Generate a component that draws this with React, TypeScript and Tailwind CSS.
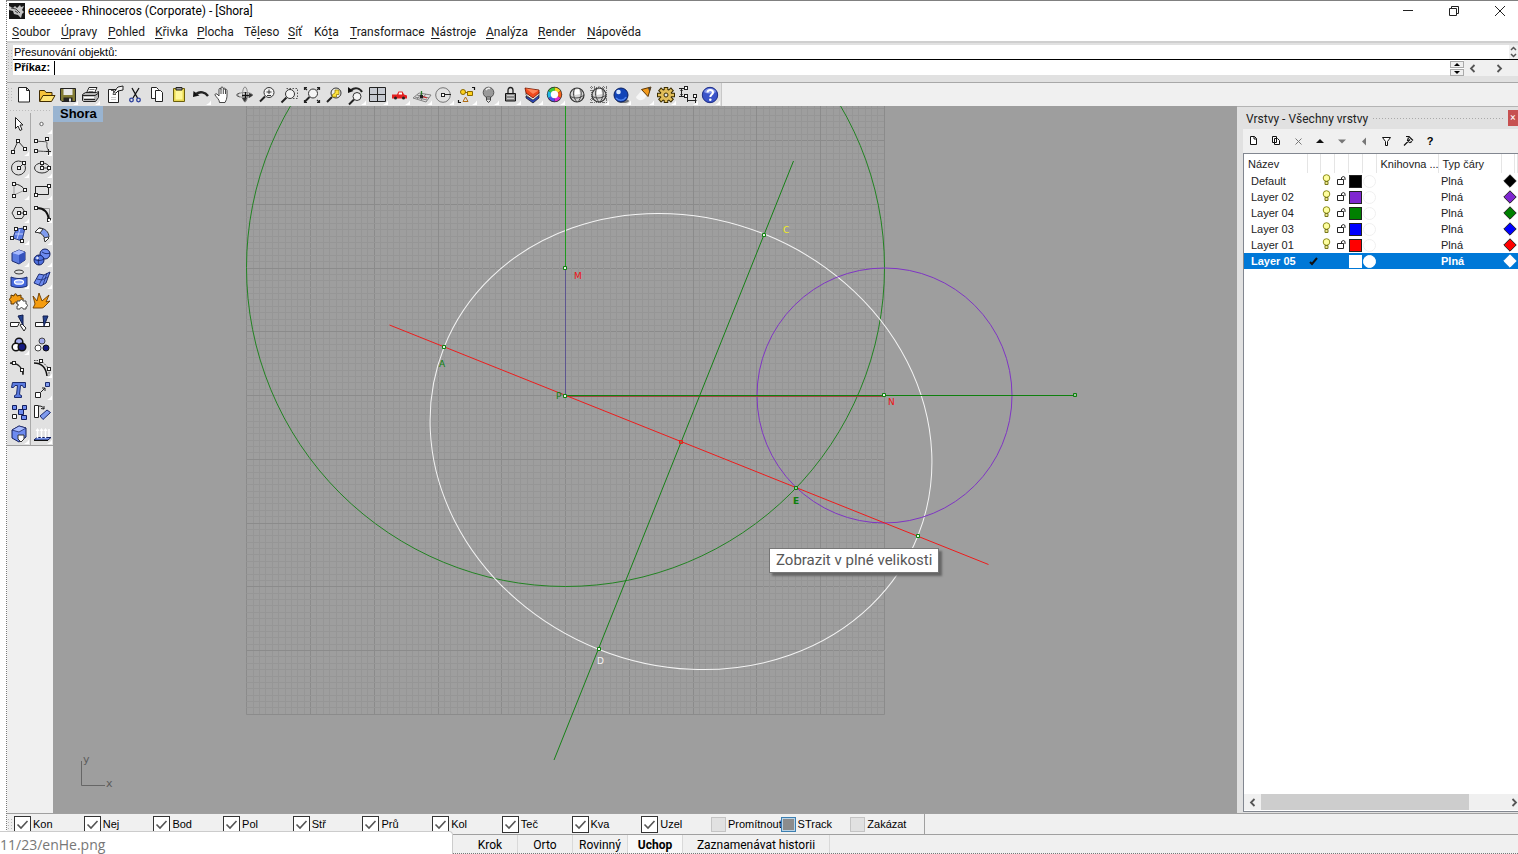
import React from 'react';

type Tool = { label: string; icon: React.ReactNode; flyout?: boolean };

interface Layer {
  name: string;
  color: string;
  current?: boolean;
}

const MENU = [
  ['', 'S', 'oubor', 'w-[49px]'],
  ['', 'Ú', 'pravy', 'w-[47px]'],
  ['', 'P', 'ohled', 'w-[47px]'],
  ['', 'K', 'řivka', 'w-[42px]'],
  ['', 'P', 'locha', 'w-[47px]'],
  ['Tě', 'l', 'eso', 'w-[44px]'],
  ['', 'S', 'íť', 'w-[26px]'],
  ['Kó', 't', 'a', 'w-[36px]'],
  ['', 'T', 'ransformace', 'w-[81px]'],
  ['', 'N', 'ástroje', 'w-[55px]'],
  ['', 'A', 'nalýza', 'w-[52px]'],
  ['', 'R', 'ender', 'w-[49px]'],
  ['', 'N', 'ápověda', 'w-[60px]'],
];

const LAYERS: Layer[] = [
  { name: 'Default', color: '#000000' },
  { name: 'Layer 02', color: '#7f26d0' },
  { name: 'Layer 04', color: '#008000' },
  { name: 'Layer 03', color: '#0000ff' },
  { name: 'Layer 01', color: '#ff0000' },
  { name: 'Layer 05', color: '#ffffff', current: true },
];

const OSNAPS = ['Kon', 'Nej', 'Bod', 'Pol', 'Stř', 'Prů', 'Kol', 'Teč', 'Kva', 'Uzel'];

const Handle = ({ x, y }: { x: number; y: number }) => (
  <rect x={Math.floor(x) - 1.5} y={Math.floor(y) - 1.5} width="3" height="3" fill="#fff" stroke="#222" strokeWidth="1" />
);

const Magnifier = ({ cx = 13, cy = 9, r = 4.5, fill = '#f4f4f4' }) => (
  <>
    <path d={`M${cx - r + 1} ${cy + r - 1}L${cx - r - 4} ${cy + r + 4}`} stroke="#222" strokeWidth="2" />
    <circle cx={cx} cy={cy} r={r} fill={fill} stroke="#333" />
  </>
);

const MAIN_TOOLS: Tool[] = [
  { label: 'Nový', icon: <path d="M5.5 3.5h8l3 3v11.5h-11zM13.5 3.5v3h3" fill="#fff" stroke="#222" /> },
  {
    label: 'Otevřít',
    icon: (
      <>
        <path d="M4.5 17V6.500h5l1.500 2h6v3" fill="#f7c33c" stroke="#422c00" />
        <path d="M4.5 17.500L8 11.500h12L16.500 17.500z" fill="#ffe476" stroke="#422c00" />
      </>
    ),
  },
  {
    label: 'Uložit',
    flyout: true,
    icon: (
      <>
        <path d="M3.5 4.500h15v13H5L3.500 16z" fill="#827b35" stroke="#222" />
        <path d="M6.500 5h9v6h-9z" fill="#e8e8e8" />
        <path d="M6.500 13.500h9v4h-9z" fill="#222" />
        <path d="M12 14.500h2v3h-2z" fill="#ddd" />
      </>
    ),
  },
  {
    label: 'Tisk',
    flyout: true,
    icon: (
      <>
        <path d="M7.500 9L10 3.500h8L15.500 9" fill="#fff" stroke="#222" />
        <path d="M10.500 5.500h5M9.500 7.500h5" stroke="#777" />
        <path d="M3.500 10.500l3-2h11l2-1v6l-3 4h-12l-1-1z" fill="#b5b5b5" stroke="#222" />
        <path d="M4 11.500h12l3-2M5 15.500h11" stroke="#222" />
        <path d="M5 13.500h10" stroke="#fff" strokeWidth="1.500" />
      </>
    ),
  },
  {
    label: 'Vlastnosti dokumentu',
    icon: (
      <>
        <path d="M6.500 5.500h10v13h-10z" fill="#fff" stroke="#222" />
        <path d="M11 8c3 0 3-4 5-5l5-1v4l-5 1-2 2c-2 1-1-1-3-1z" fill="#f4f4f4" stroke="#222" />
        <path d="M9 6.500h3l-1 4h3" stroke="#555" />
        <path d="M9 13.500h5M9 15.500h5" stroke="#ccc" />
      </>
    ),
  },
  {
    label: 'Vyjmout',
    icon: (
      <>
        <path d="M8 4l5.500 10M15 4L9 14" stroke="#111" strokeWidth="1.300" />
        <circle cx="7.500" cy="16" r="1.800" fill="none" stroke="#2b3f9c" strokeWidth="1.300" />
        <circle cx="14.500" cy="16" r="1.800" fill="none" stroke="#2b3f9c" strokeWidth="1.300" />
      </>
    ),
  },
  {
    label: 'Kopírovat',
    icon: (
      <>
        <path d="M5.500 3.500h5l2 2v9h-7z" fill="#fff" stroke="#222" />
        <path d="M9.500 6.500h5l2 2v9h-7z" fill="#fff" stroke="#222" />
      </>
    ),
  },
  {
    label: 'Vložit',
    icon: (
      <>
        <path d="M5.500 4.500h11v13h-11z" fill="#e8d750" stroke="#6b5f0c" />
        <path d="M7.500 6.500h7v9h-7z" fill="#fff79a" />
        <path d="M8 3.500h6v2.500H8z" fill="#999" stroke="#222" />
      </>
    ),
  },
  {
    label: 'Zpět',
    flyout: true,
    icon: (
      <>
        <path d="M3 13L3.500 7l6 4.500z" fill="#111" />
        <path d="M6 10c4-3 9-2 12 2" stroke="#222" strokeWidth="2.400" fill="none" />
      </>
    ),
  },
  {
    label: 'Posun pohledu',
    icon: (
      <path
        d="M7.500 18.500c0-3-3-5-4.500-7.500 0-2 2-1.500 4 1V5.500c0-1.500 2-1.500 2 0V4c0-1.500 2-1.500 2 0s2-1 2 .5V6c0-1 2-1 2 .5 0 5 .5 8-2 12zM9 5.500V10M11.300 4.500V10M13.500 5.500V10"
        fill="#fff"
        stroke="#333"
        strokeWidth=".9"
      />
    ),
  },
  {
    label: 'Otáčet pohled',
    icon: (
      <>
        <ellipse cx="11" cy="11" rx="7.500" ry="2.500" fill="none" stroke="#888" />
        <ellipse cx="11" cy="10.500" rx="2.500" ry="7.500" fill="none" stroke="#888" />
        <path d="M11.500 8v8M8 11.500h7" stroke="#111" strokeWidth="1.300" />
        <path d="M8 14l3 4 2-4zM15 9l4 2-4 3z" fill="#333" />
        <path d="M2.500 10.500l3-1.500M2.500 11.500l3 1.500" stroke="#555" />
      </>
    ),
  },
  {
    label: 'Dynamický zoom',
    icon: (
      <>
        <Magnifier cx={13} cy={8.5} r={5} />
        <path d="M10.500 8h5M13 5.500v4.500M11 11.500h4" stroke="#222" strokeWidth=".9" />
      </>
    ),
  },
  {
    label: 'Zoom oknem',
    icon: (
      <>
        <path d="M7.500 4.500h11v10h-6" fill="none" stroke="#555" strokeDasharray="1.500 1.500" />
        <Magnifier cx={11} cy={10} />
      </>
    ),
  },
  {
    label: 'Zoom na vše',
    icon: (
      <>
        <path d="M3.500 6V3.500H6M16 3.500h2.500V6M18.500 16v2.500H16M3.500 16v2.500H6M4 4l2 2M18 4l-2 2M18 18l-2-2" fill="none" stroke="#222" strokeWidth="1.200" />
        <Magnifier cx={12} cy={9.500} />
      </>
    ),
  },
  {
    label: 'Zoom na vybrané',
    icon: (
      <>
        <Magnifier cx={13} cy={9} r={5} fill="#eee" />
        <path d="M9.500 10.500l2.500-1.500V6h4v4.500h-2.500V13h-4z" fill="#ffe23b" stroke="#887500" strokeWidth=".7" />
      </>
    ),
  },
  {
    label: 'Předchozí pohled',
    flyout: true,
    icon: (
      <>
        <Magnifier cx={12} cy={12.500} r={4} />
        <path d="M3 9V3l5.500 4z" fill="#111" />
        <path d="M6 6c4-3 9-2 11 2" stroke="#222" strokeWidth="2" fill="none" />
      </>
    ),
  },
  {
    label: 'Čtyři pohledy',
    flyout: true,
    icon: (
      <>
        <path d="M2.500 3.500h16v14h-16z" fill="#c7cbd2" stroke="#222" />
        <path d="M10.500 3.500v14M2.500 10.500h16" stroke="#222" />
      </>
    ),
  },
  {
    label: 'Pohled zprava',
    flyout: true,
    icon: (
      <>
        <path d="M3 10.500h5l1.500-3h4l1.500 3 3 1v3H3z" fill="#e32020" />
        <path d="M10 8.500h3v2H9.500z" fill="#fff" />
        <circle cx="6.500" cy="14" r="1.500" fill="#222" />
        <circle cx="14.500" cy="14" r="1.500" fill="#222" />
      </>
    ),
  },
  {
    label: 'Konstrukční rovina',
    flyout: true,
    icon: (
      <>
        <path d="M2 14l6-5 12 2-5 7zM4 13l12 3M6 11l12 3M6 15l5-6M10 16l5-6" fill="none" stroke="#777" strokeWidth=".9" />
        <path d="M10.500 12V7" stroke="#2b7a2b" strokeWidth="1.300" />
        <path d="M10 12l6 2" stroke="#c22" strokeWidth="1.300" />
        <path d="M9 11h3v3H9z" fill="#222" />
      </>
    ),
  },
  {
    label: 'Nastavit pohled',
    flyout: true,
    icon: (
      <>
        <circle cx="10" cy="11" r="7.300" fill="none" stroke="#777" />
        <path d="M10 10.500h8" stroke="#222" />
        <Handle x={10} y={11} />
      </>
    ),
  },
  {
    label: 'Výběr objektů',
    flyout: true,
    icon: (
      <>
        <path d="M16 3.500h2.500V6M2.500 16v2.500H5" fill="none" stroke="#111" strokeWidth="1.200" />
        <circle cx="7" cy="8" r="2.500" fill="#ffd21f" stroke="#8a6a00" />
        <path d="M11.500 7.500h5v4h-5z" fill="#ffd21f" stroke="#8a6a00" />
        <path d="M9.500 13l-2.500 4.500h5z" fill="none" stroke="#b06b12" />
        <path d="M9 8.500h2" stroke="#8a6a00" />
      </>
    ),
  },
  {
    label: 'Skrýt objekty',
    flyout: true,
    icon: (
      <>
        <circle cx="10.500" cy="8.500" r="5.300" fill="#999" stroke="#555" />
        <path d="M8 6c1-1.500 2.500-2 4-1.500" stroke="#eee" fill="none" strokeWidth="1.500" />
        <path d="M8.500 13h4v3.500l-2 2-2-2z" fill="#ddd" stroke="#444" />
        <path d="M8.500 15h4" stroke="#333" />
      </>
    ),
  },
  {
    label: 'Zamknout objekty',
    flyout: true,
    icon: (
      <>
        <path d="M8 10V6.500c0-4 5-4 5 0V10" fill="none" stroke="#222" strokeWidth="1.300" />
        <path d="M5.500 9.500h10v7.500h-10z" fill="#888" stroke="#111" />
        <path d="M7 11.500h7M7 14.500h7" stroke="#ccc" />
      </>
    ),
  },
  {
    label: 'Vrstvy',
    flyout: true,
    icon: (
      <>
        <path d="M4 12l7 4 6-5v3l-6 5-7-5z" fill="#2b45b8" stroke="#111" strokeWidth=".7" />
        <path d="M4 9l7 4 6-5v3l-6 5-7-5z" fill="#fff" stroke="#333" strokeWidth=".7" />
        <path d="M3 4l14 2v3l-6 5-7-5z" fill="#f04a1d" stroke="#701500" strokeWidth=".8" />
        <path d="M4 4.500L16.500 6.500 11 10z" fill="#ff8658" />
      </>
    ),
  },
  {
    label: 'Vlastnosti',
    flyout: true,
    icon: (
      <>
        <circle cx="10.500" cy="10.500" r="7.700" fill="#222" />
        <path d="M10.500 10.500V3.500a7 7 0 0 1 6 3.500z" fill="#f6d51f" />
        <path d="M10.500 10.500l6-3.500a7 7 0 0 1 0 7z" fill="#f4631b" />
        <path d="M10.500 10.500l6 3.500a7 7 0 0 1-6 3.500z" fill="#e02ccc" />
        <path d="M10.500 10.500v7a7 7 0 0 1-6-3.500z" fill="#4a50e8" />
        <path d="M10.500 10.500L4.500 14a7 7 0 0 1 0-7z" fill="#21b9e8" />
        <path d="M10.500 10.500L4.500 7a7 7 0 0 1 6-3.500z" fill="#3cc93a" />
        <circle cx="10.500" cy="10.500" r="3.700" fill="#fff" />
      </>
    ),
  },
  {
    label: 'Stínovat',
    icon: (
      <>
        <circle cx="11" cy="11" r="7" fill="#d4d4d4" stroke="#333" strokeWidth="1.200" />
        <path d="M8.500 5c-2 4-1 9 2.500 13M4 12c4 3 10 2.500 14-1M14 5c2.500 4 1 9-2 13" fill="none" stroke="#444" />
        <path d="M9 6l4-1 1 5-5 1z" fill="#fff" />
      </>
    ),
  },
  {
    label: 'Render náhled',
    flyout: true,
    icon: (
      <>
        <path d="M3.500 2v18M6.500 2v18M15.500 2v18M18.500 2v18M11 2v18M2 3.500h18M2 6.500h18M2 15.500h18M2 18.500h18" stroke="#777" strokeDasharray="1 1" />
        <circle cx="11" cy="11" r="7" fill="#d4d4d4" stroke="#333" strokeWidth="1.200" />
        <path d="M8.500 5c-2 4-1 9 2.500 13M4 12c4 3 10 2.500 14-1M14 5c2.500 4 1 9-2 13" fill="none" stroke="#444" />
        <path d="M9 6l4-1 1 5-5 1z" fill="#fff" />
      </>
    ),
  },
  {
    label: 'Render',
    flyout: true,
    icon: (
      <>
        <ellipse cx="13" cy="17" rx="6" ry="2" fill="#777" />
        <circle cx="11" cy="11" r="7" fill="#1244b8" stroke="#0a1f5e" />
        <circle cx="8.500" cy="8" r="2.300" fill="#d5e6ff" />
        <path d="M6 14c3 3 8 3 10-1" stroke="#4f84f0" fill="none" strokeWidth="1.500" />
      </>
    ),
  },
  {
    label: 'Světla',
    flyout: true,
    icon: (
      <>
        <path d="M9 6L3 13c1 4 7 4 9 1l2-3z" fill="#f6f6f6" />
        <path d="M8.500 5.500L18 3l-3 9.500z" fill="#f2991a" stroke="#5c3500" />
        <path d="M15 4l3-1-1.500 5z" fill="#444" />
      </>
    ),
  },
  {
    label: 'Možnosti',
    flyout: true,
    icon: (
      <>
        <g stroke="#3a2c00" strokeWidth="4.500">
          <path d="M11 3v16M2 11h18M4.500 5l13 12M17.500 5l-13 12" />
        </g>
        <circle cx="11" cy="11" r="6.200" fill="#3a2c00" />
        <g stroke="#e0bd5a" strokeWidth="2.600">
          <path d="M11 4v14M3 11h16M5.300 5.800l11.400 10.400M16.700 5.800L5.300 16.200" />
        </g>
        <circle cx="11" cy="11" r="5.200" fill="#e0bd5a" />
        <circle cx="11" cy="11" r="2" fill="#e1e1e1" stroke="#3a2c00" />
      </>
    ),
  },
  {
    label: 'Kóty',
    flyout: true,
    icon: (
      <>
        <path d="M4.500 4.500v8M2 4.500h7M2 12.500h5M10.500 16.500h9M10.500 14v4M18.500 13v6" stroke="#222" />
        <path d="M3 7l1.500-2L6 7zM3 10l1.500 2L6 10z" fill="#222" />
        <Handle x={9} y={4} />
        <Handle x={9} y={12} />
        <Handle x={18} y={12} />
      </>
    ),
  },
  {
    label: 'Nápověda',
    flyout: true,
    icon: (
      <>
        <circle cx="11" cy="11" r="7.700" fill="#3b54c9" stroke="#1c2c85" />
        <path d="M5 8a6.500 6 0 0 1 12 0c-3 2-9 2-12 0z" fill="#8496ea" />
        <path d="M8.500 8.500c0-3.500 5.500-3.500 5.500 0 0 2-2.700 2-2.700 4.500" fill="none" stroke="#fff" strokeWidth="2" />
        <circle cx="11.300" cy="15.700" r="1.300" fill="#fff" />
      </>
    ),
  },
];

// two tools per row, left column first
const SIDE_TOOLS: Tool[] = [
  { label: 'Výběr', icon: <path d="M7.500 4.500v11l2.500-2.500 2 4.500 2-1-2-4.500h3z" fill="#fff" stroke="#222" /> },
  { label: 'Bod', flyout: true, icon: <circle cx="10.500" cy="11" r="1.700" fill="#fff" stroke="#666" /> },
  {
    label: 'Polylinie',
    flyout: true,
    icon: (
      <>
        <path d="M5 17l5-11 7 8" fill="none" stroke="#333" />
        <Handle x={5} y={17} />
        <Handle x={10} y={6} />
        <Handle x={17} y={14} />
      </>
    ),
  },
  {
    label: 'Křivka',
    flyout: true,
    icon: (
      <>
        <path d="M5 6c8 1 11 0 11 2s-1 4 2 8c-3 1-7 0-13 0" fill="none" stroke="#444" />
        <Handle x={5} y={6} />
        <Handle x={16} y={4} />
        <Handle x={5} y={16} />
        <path d="M17.500 14v6M15 16.500h5" stroke="#222" />
      </>
    ),
  },
  {
    label: 'Kružnice',
    flyout: true,
    icon: (
      <>
        <circle cx="10.500" cy="11" r="7" fill="none" stroke="#333" />
        <path d="M11 11l5-5" stroke="#333" />
        <Handle x={11} y={11} />
        <Handle x={16} y={6} />
      </>
    ),
  },
  {
    label: 'Elipsa',
    flyout: true,
    icon: (
      <>
        <ellipse cx="11" cy="11" rx="7.500" ry="5" fill="none" stroke="#333" />
        <path d="M11 6v5h8" stroke="#333" fill="none" />
        <Handle x={11} y={6} />
        <Handle x={11} y={11} />
        <Handle x={18} y={11} />
      </>
    ),
  },
  {
    label: 'Oblouk',
    flyout: true,
    icon: (
      <>
        <path d="M17 11L6 16V5" fill="none" stroke="#999" />
        <path d="M6 5c5 0 9 3 11 6" fill="none" stroke="#222" />
        <Handle x={6} y={5} />
        <Handle x={17} y={11} />
        <Handle x={6} y={17} />
      </>
    ),
  },
  {
    label: 'Obdélník',
    flyout: true,
    icon: (
      <>
        <path d="M4.500 7.500h13v8h-13z" fill="none" stroke="#222" />
        <Handle x={18} y={7} />
        <Handle x={5} y={16} />
      </>
    ),
  },
  {
    label: 'Mnohoúhelník',
    flyout: true,
    icon: (
      <>
        <path d="M4 11l3-5.500h7l3.500 5.500-3.500 5.500H7z" fill="none" stroke="#333" />
        <path d="M11 11h6" stroke="#333" />
        <Handle x={11} y={11} />
        <Handle x={17} y={11} />
      </>
    ),
  },
  {
    label: 'Zaoblit křivky',
    flyout: true,
    icon: (
      <>
        <path d="M5 6.500h13.500V18" fill="none" stroke="#999" />
        <path d="M6 6c7 0 11 4 12 12" fill="none" stroke="#111" strokeWidth="1.800" />
        <Handle x={5} y={6} />
        <Handle x={18} y={18} />
      </>
    ),
  },
  {
    label: 'Plocha z bodů',
    flyout: true,
    icon: (
      <>
        <path d="M8 5l9-1-3 13-9-3z" fill="#5b7be0" stroke="#1c2c70" strokeWidth=".9" />
        <path d="M12 5l-3 10M7 10h8" stroke="#c3d0ff" />
        <Handle x={8} y={5} />
        <Handle x={17} y={4} />
        <Handle x={4} y={14} />
        <Handle x={14} y={17} />
      </>
    ),
  },
  {
    label: 'Zaoblit plochy',
    flyout: true,
    icon: (
      <>
        <path d="M4 8l4-4c6 0 10 4 10 9l-4 4c0-5-4-9-10-9z" fill="#7f9bee" stroke="#333" />
        <path d="M4 8l4-4 4 1-3 4z" fill="#fff" stroke="#333" />
        <path d="M13 14l4-1 1 1-4 4z" fill="#fff" stroke="#333" />
      </>
    ),
  },
  {
    label: 'Kvádr',
    flyout: true,
    icon: (
      <>
        <path d="M4 7l7-3 6 2v8l-6 4-7-3z" fill="#5b7be0" stroke="#1c2c70" />
        <path d="M4 7l7-3 6 2-6 3z" fill="#a9bcff" />
        <path d="M11 9v9l6-4V6z" fill="#3552bb" />
      </>
    ),
  },
  {
    label: 'Booleovské operace',
    flyout: true,
    icon: (
      <>
        <circle cx="14" cy="8" r="5" fill="#6d8bf0" stroke="#111d5c" />
        <circle cx="8" cy="14" r="5" fill="#5072e0" stroke="#111d5c" />
        <path d="M3 13c3 2 7 2 10 0M8 9c-1 3-1 7 0 10M11 6c3 2 5 2 8 1" stroke="#111d5c" fill="none" strokeWidth=".8" />
        <circle cx="6.500" cy="12" r="1.300" fill="#dfe7ff" />
      </>
    ),
  },
  {
    label: 'Promítnout křivky',
    flyout: true,
    icon: (
      <>
        <ellipse cx="11" cy="4" rx="4.500" ry="2" fill="none" stroke="#333" />
        <path d="M3 9c5 2 11 2 16 0v9c-5 2-11 2-16 0z" fill="#4467dc" stroke="#1c2c70" />
        <ellipse cx="11" cy="14" rx="4.500" ry="2.200" fill="#9db4ff" stroke="#fff" strokeWidth="1.300" />
      </>
    ),
  },
  {
    label: 'Síť',
    flyout: true,
    icon: (
      <>
        <path d="M3 15l5-9 5 1 6-3-4 11-5 3z" fill="#6d8bf0" stroke="#1c2c70" />
        <path d="M6 11l5 1 6-3M8 17l5-10M12 17l4-12" stroke="#1c2c70" fill="none" strokeWidth=".8" />
      </>
    ),
  },
  {
    label: 'Spojit',
    icon: (
      <>
        <path d="M3 5l3 1c0-3 3-3 3 0l4-1v3c3-1 3 3 0 3v3H9c0-3-3-2-3 0H3v-3c-2 0-2-3 0-3z" fill="#f39c12" stroke="#5c3500" />
        <path d="M9 11h3c0-2 3-2 3 0h3v3c2 0 2 3 0 3v2h-3c0-2-3-2-3 0H9v-3c2 0 2-2 0-2z" fill="#fff" stroke="#444" />
      </>
    ),
  },
  {
    label: 'Rozložit',
    icon: <path d="M2 6l4 5 2-8 3 8 7-6-3 7 4-1-6 6c-1 1-2 1-3 1H2l2-4z" fill="#f59c0f" stroke="#6b3b00" strokeWidth=".9" />,
  },
  {
    label: 'Oříznout',
    icon: (
      <>
        <path d="M2.500 10.500h9l-2 4h-7z" fill="#fff" stroke="#222" />
        <path d="M12 13l2-1 4 4-2 3z" fill="#fff" stroke="#222" />
        <path d="M10 4l5-1v10z" fill="#24428f" stroke="#111d4c" />
      </>
    ),
  },
  {
    label: 'Rozdělit',
    icon: (
      <>
        <path d="M4.500 10.500h14v4h-14z" fill="#fff" stroke="#222" />
        <path d="M12 4h5l-4 10z" fill="#24428f" stroke="#111d4c" />
      </>
    ),
  },
  {
    label: 'Seskupit',
    flyout: true,
    icon: (
      <>
        <circle cx="11" cy="8" r="3.800" fill="#a5aef0" stroke="#111" strokeWidth="1.500" />
        <circle cx="8" cy="13" r="3.800" fill="#fff" stroke="#111" strokeWidth="1.500" />
        <circle cx="14" cy="13" r="3.800" fill="#151a80" stroke="#111" strokeWidth="1.500" />
      </>
    ),
  },
  {
    label: 'Zrušit skupinu',
    icon: (
      <>
        <circle cx="11" cy="7" r="3" fill="#a5aef0" stroke="#444" />
        <circle cx="7" cy="14" r="3" fill="#fff" stroke="#444" />
        <circle cx="15" cy="14" r="3" fill="#151a80" stroke="#111" />
      </>
    ),
  },
  {
    label: 'Upravit body',
    icon: (
      <>
        <path d="M3 6c7 0 12 5 12 12" fill="none" stroke="#222" strokeWidth="1.300" />
        <path d="M2 6l5 1M15 11v6" stroke="#222" strokeWidth="1.500" />
        <Handle x={6} y={6} />
        <Handle x={14} y={13} />
      </>
    ),
  },
  {
    label: 'Upravit řídicí body',
    flyout: true,
    icon: (
      <>
        <path d="M3 6c8 0 12 5 13 13" fill="none" stroke="#111" strokeWidth="1.500" />
        <path d="M3 3.500h9M10 3.500l8 8v7" fill="none" stroke="#444" strokeDasharray="1.500 1" />
        <Handle x={10} y={4} />
        <Handle x={18} y={12} />
      </>
    ),
  },
  {
    label: 'Text',
    icon: <path d="M4.500 3.500h13v5h-2l-1-2h-2l-1 9 2 1v2h-7v-2l2-1 1-9H7l-1.500 2h-2z" fill="#5b7be0" stroke="#1c2c70" />,
  },
  {
    label: 'Přesunout',
    flyout: true,
    icon: (
      <>
        <path d="M4.500 13.500h5v5h-5z" fill="#fff" stroke="#222" />
        <path d="M14.500 3.500h4v4h-4z" fill="#7f9bee" stroke="#1c2c70" />
        <path d="M10 13l4-4M14 9h-3M14 9v3" stroke="#222" />
      </>
    ),
  },
  {
    label: 'Kopírovat objekty',
    icon: (
      <>
        <path d="M4.500 13.500h4v4h-4z" fill="#fff" stroke="#222" />
        <path d="M4.500 4.500h4v4h-4zM10.500 8.500h5v5h-5zM14.500 4.500h4v4h-4zM13.500 14.500h5v4h-5z" fill="#6d8bf0" stroke="#111d5c" />
      </>
    ),
  },
  {
    label: 'Otočit',
    icon: (
      <>
        <path d="M3.500 4.500h4v12h-4z" fill="#fff" stroke="#222" />
        <path d="M9 15l7-6 3.500 2.500-7.500 7z" fill="#7f9bee" stroke="#1c2c70" />
        <path d="M8 5c3 0 4 1 5 3M13 8V5M13 8l-3-.5" stroke="#222" fill="none" />
      </>
    ),
  },
  {
    label: 'Viditelnost',
    flyout: true,
    icon: (
      <>
        <path d="M4 7l7-4 7 2v9l-7 5-7-4z" fill="#6d8bf0" stroke="#111d5c" />
        <path d="M4 7l7-4 7 2-7 4z" fill="#a9bcff" stroke="#111d5c" strokeWidth=".7" />
        <path d="M10 12h6v4l-3 3-3-3z" fill="#fff" stroke="#333" />
      </>
    ),
  },
  {
    label: 'Analýza směru',
    flyout: true,
    icon: (
      <>
        <path d="M3 17l3-2.500h14L17 17z" fill="#7f9bee" stroke="#111d5c" />
        <path d="M6.500 15V6M10.500 15V6M14.500 15V6M18 14V6" stroke="#fff" strokeWidth="1.500" />
        <path d="M4.500 8l2-3 2 3zM8.500 8l2-3 2 3zM12.500 8l2-3 2 3z" fill="#fff" />
        <path d="M3 17.500h14" stroke="#111" />
      </>
    ),
  },
];

const ToolButton = ({ label, icon, flyout }: Tool) => (
  <button aria-label={label} className="h-[22px] w-[22px] shrink-0 hover:bg-white/60">
    <svg width="22" height="22" viewBox="0 0 22 22" fill="none">
      {icon}
      {flyout && <path d="M21 16.500v4.500h-5q3-1 5-4.500z" fill="#fff" />}
    </svg>
  </button>
);

const Chevron = ({ right }: { right?: boolean }) => (
  <svg width="7" height="9" viewBox="0 0 7 9" fill="none" stroke="#555" strokeWidth="1.800">
    <path d={right ? 'M1.500 1l3.500 3.500L1.500 8' : 'M5.500 1L2 4.500 5.500 8'} />
  </svg>
);

const Grip = () => <div className="my-1 w-1.5 shrink-0 bg-[radial-gradient(#bbb_1px,transparent_1px)] bg-[size:3px_3px]" />;

const MINOR = 6.375;

const Viewport = () => {
  const lines = Array.from({ length: 101 }, (_, i) => i);

  return (
    <main className="relative min-w-0 flex-1 overflow-hidden bg-[#9e9e9e]">
      <svg className="absolute inset-0 h-full w-full" fontFamily="DejaVu Sans, sans-serif" fontSize="9">
        {/* world origin sits at 512.5, 289.5 */}
        <g transform="translate(512.5 289.5)" fill="none">
          {lines.map((i) => {
            const p = Math.round((i - 50) * MINOR);
            const stroke = i % 10 === 0 ? '#8b8b8b' : '#969696';
            return (
              <g key={i} stroke={stroke}>
                <path d={`M${p} -319V319`} />
                <path d={`M-319 ${p}H319`} />
              </g>
            );
          })}

          <circle cx="0" cy="-128" r="319" stroke="#228322" />
          <ellipse cx="115.500" cy="46" rx="255" ry="223.500" transform="rotate(21.700 115.500 46)" stroke="#f4f4f4" />
          <circle cx="319" cy="0" r="127.500" stroke="#7f35c4" />

          <path d="M0 -400V-128" stroke="#1f9a1f" />
          <path d="M0 -128V0" stroke="#5d5590" />
          <path d="M0 0H510" stroke="#0f800f" />
          <path d="M0 1H319" stroke="#a04848" />
          <path d="M228 -234.500L-11.500 364.500" stroke="#168016" />
          <path d="M-176 -70.500L423 169" stroke="#ee1c1c" />

          <g stroke="#0c800c" fill="#e8f4e8">
            <path d="M-2 -129h3v3h-3zM-2 -1h3v3h-3zM317 -2h3v3h-3z" />
            <path d="M197 -162h3v3h-3zM-123 -50h3v3h-3zM351 139h3v3h-3zM32 252h3v3h-3z" />
          </g>
          <g stroke="#0c800c" fill="#9fc49f">
            <path d="M508 -2h3v3h-3zM229 91h3v3h-3z" />
          </g>
          <path d="M114 45h3v3h-3z" stroke="#ee1c1c" fill="#9a6a3a" />
        </g>

        <text x="521" y="173" fill="#ee1111">M</text>
        <text x="835" y="299" fill="#ee1111">N</text>
        <text x="730" y="127" fill="#f2ee1a">C</text>
        <text x="386" y="261" fill="#0c800c">A</text>
        <text x="503" y="293" fill="#0c800c">P</text>
        <text x="740" y="398" fill="#0c800c" fontWeight="bold">E</text>
        <text x="544" y="558" fill="#f4f4f4">D</text>

        <path d="M28.500 655v24.500H52" fill="none" stroke="#666" />
        <text x="30" y="657" fill="#5c5c5c" fontSize="11">y</text>
        <text x="53" y="681" fill="#5c5c5c" fontSize="11">x</text>
      </svg>

      <span className="absolute left-0 top-0 h-4 bg-[#99b4d1] pl-[7px] pr-[6px] font-['Liberation_Sans'] text-[13px] font-bold leading-4 text-black">
        Shora
      </span>
      <div className="absolute left-[716px] top-[442px] border border-[#767676] bg-white px-[6px] font-['Roboto'] text-[15px] leading-[23px] text-[#575757] shadow-[3px_3px_2px_#666]">
        Zobrazit v plné velikosti
      </div>
    </main>
  );
};

const LAYER_TOOLS: Tool[] = [
  { label: 'Nová vrstva', icon: <path d="M7.500 6.500h4l2 2v6h-6zM11 6.500v2.500h2.500" fill="#fff" stroke="#111" /> },
  { label: 'Nová podvrstva', icon: <path d="M7.500 6.500h4v6h-4zM9.500 8.500h3l2 2v4h-5z" fill="#fff" stroke="#111" /> },
  { label: 'Odstranit', icon: <path d="M8.500 8.500l6 6M14.500 8.500l-6 6" stroke="#777" /> },
  { label: 'Nahoru', icon: <path d="M7 13l4-4 4 4z" fill="#111" /> },
  { label: 'Dolů', icon: <path d="M7 9.500h8l-4 4z" fill="#777" /> },
  { label: 'O úroveň výš', icon: <path d="M13 7.500v8l-4-4z" fill="#777" /> },
  { label: 'Filtr', icon: <path d="M7.500 7.500h8l-3 4v4h-2v-4z" fill="#fff" stroke="#111" /> },
  { label: 'Nástroje', icon: <path d="M7 15.500l6-6M9 6.500h3l4 4M11.500 7.500l-1 3 2.500 2 2-1" stroke="#111" strokeWidth="1.200" /> },
];

const Bulb = () => (
  <svg width="9" height="12" viewBox="0 0 9 12">
    <circle cx="4.500" cy="4" r="3.300" fill="#ffffa0" stroke="#8c8c1c" />
    <path d="M3 7.500h3v3H3z" fill="#eee88a" stroke="#77771c" />
  </svg>
);

const Unlocked = () => (
  <svg width="10" height="11" viewBox="0 0 10 11" fill="none" stroke="#222">
    <path d="M1.500 4.500h6v5h-6zM5.500 4V2.500q2-2 3.500 0V5" />
  </svg>
);

const LayerRow = ({ name, color, current }: Layer) => (
  <tr className={`h-4 ${current ? 'bg-[#0078d7] font-bold text-white' : 'text-[#222]'}`}>
    <td className="whitespace-nowrap p-0 pl-[7px]">{name}</td>
    <td className="p-0 pl-0.5">
      {current && (
        <svg width="10" height="9" viewBox="0 0 10 9" fill="none" stroke="#111" strokeWidth="2">
          <path d="M1 5l2 2 5-6" />
        </svg>
      )}
    </td>
    <td className="p-0 pb-0.5 pl-0.5">{!current && <Bulb />}</td>
    <td className="p-0 pb-0.5 pl-0.5">{!current && <Unlocked />}</td>
    <td className="p-0 pl-px">
      <svg width="13" height="14" viewBox="0 0 13 14">
        <rect x=".5" y="1.500" width="12" height="12" fill={color} stroke={current ? '#fff' : '#222'} />
      </svg>
    </td>
    <td className="p-0 pl-px">
      <svg width="13" height="13" viewBox="0 0 13 13">
        <circle cx="6.500" cy="6.500" r="6" fill="#fff" stroke={current ? '#fff' : '#efefef'} />
      </svg>
    </td>
    <td className="p-0" />
    <td className="p-0 pl-[3px]">Plná</td>
    <td className="overflow-visible p-0 pl-0.5" colSpan={2}>
      <svg width="14" height="14" viewBox="0 0 14 14">
        <path d="M7 .8L13.200 7 7 13.200.800 7z" fill={color} stroke={current ? '#fff' : '#222'} />
      </svg>
    </td>
  </tr>
);

const LayersPanel = () => (
  <aside className="flex w-[281px] shrink-0 flex-col border-t border-[#b4b4b4] bg-[#e1e1e1] pb-px pl-1.5">
    <header className="flex h-[22px] items-center pl-[3px]">
      <h2 className="pt-0.5 text-[12px] text-[#222]">Vrstvy - Všechny vrstvy</h2>
      <div className="mx-1 h-[3px] flex-1 bg-[radial-gradient(#aaa_1px,transparent_1px)] bg-[size:3px_3px]" />
      <button aria-label="Zavřít panel" className="h-4 w-2.5 bg-[#c75050] text-[10px] leading-4 text-white">×</button>
    </header>
    <div className="flex h-6 items-center bg-[#f0f0f0]">
      {LAYER_TOOLS.map((tool) => (
        <ToolButton key={tool.label} {...tool} />
      ))}
      <button className="w-[22px] font-['Liberation_Sans'] text-[11px] font-bold">?</button>
    </div>
    <div className="flex flex-1 flex-col border border-r-0 border-[#828790] bg-white pb-px">
      <div className="flex-1 overflow-hidden">
        <table className="w-[274px] table-fixed border-collapse text-left font-['Liberation_Sans'] text-[11px] leading-4">
          <colgroup>
            <col className="w-[63px]" />
            <col className="w-[13px]" />
            <col className="w-[14px]" />
            <col className="w-[14px]" />
            <col className="w-[14px]" />
            <col className="w-[14px]" />
            <col className="w-[62px]" />
            <col className="w-[63px]" />
            <col className="w-[13px]" />
            <col />
          </colgroup>
          <thead>
            <tr className="h-[19px] text-[#222]">
              {['Název', '', '', '', '', '', 'Knihovna ...', 'Typ čáry', '', ''].map((title, i) => (
                <th key={i} className="whitespace-nowrap border-r border-[#e5e5e5] p-0 pl-1 font-normal">
                  {title}
                </th>
              ))}
            </tr>
          </thead>
          <tbody>
            {LAYERS.map((layer) => (
              <LayerRow key={layer.name} {...layer} />
            ))}
          </tbody>
        </table>
      </div>
      <div className="flex h-4 items-center bg-[#f0f0f0]">
        <button aria-label="Posunout vlevo" className="flex w-[17px] justify-center">
          <Chevron />
        </button>
        <div className="flex h-full flex-1">
          <div className="h-full w-5/6 bg-[#cdcdcd]" />
        </div>
        <button aria-label="Posunout vpravo" className="flex w-2 justify-center">
          <Chevron right />
        </button>
      </div>
    </div>
  </aside>
);

const TitleBar = () => (
  <header className="flex h-[21px] items-center overflow-hidden border-t border-[#808080]">
    <svg width="16" height="16" viewBox="0 0 16 16" className="ml-0.5">
      <path d="M0 0h16v16H0z" fill="#181818" />
      <path d="M0 3l4 2 2-2 2 2 3-3 1 2 3-1-2 4 2 2-2 2-1 4-3-3-4-1-1-3-4-1z" fill="#c4c4c4" />
      <path d="M2 5l5 1 4 4M6 8l3 2" stroke="#444" fill="none" />
    </svg>
    <h1 className="ml-[3px] flex-1 text-[12px] text-black">eeeeeee - Rhinoceros (Corporate) - [Shora]</h1>
    <div className="-mr-[5px] flex">
      <button aria-label="Minimalizovat" className="flex w-[46px] justify-center">
        <svg width="10" height="10" stroke="#222">
          <path d="M0 4.500h10" />
        </svg>
      </button>
      <button aria-label="Obnovit" className="flex w-[46px] justify-center">
        <svg width="10" height="10" fill="none" stroke="#222">
          <path d="M.5 2.500h7v7h-7zM2.500 2.500v-2h7v7h-2" />
        </svg>
      </button>
      <button aria-label="Zavřít" className="flex w-[46px] justify-center">
        <svg width="10" height="10" stroke="#222">
          <path d="M0 0l10 10M10 0L0 10" />
        </svg>
      </button>
    </div>
  </header>
);

const CommandLine = () => (
  <section className="flex h-[42px] border-b border-t-2 border-[#a8a8a8] border-t-[#cfcfcf] bg-[#e1e1e1] pb-[7px] pt-0.5">
    <Grip />
    <div className="min-w-0 flex-1 bg-white font-['Liberation_Sans'] text-[11px] text-black">
      <div className="flex h-[15px] justify-between border-b border-black leading-[14px]">
        <p className="pl-px">Přesunování objektů:</p>
        <div className="flex w-[9px] items-center justify-center bg-[#f0f0f0]">
          <svg width="7" height="12" viewBox="0 0 7 12" fill="none" stroke="#555" strokeWidth="1.500">
            <path d="M1 4l2.500-2.500L6 4M1 8l2.500 2.500L6 8" />
          </svg>
        </div>
      </div>
      <div className="flex h-4 items-center">
        <label htmlFor="command" className="pb-0.5 pl-px pr-1 font-bold">Příkaz:</label>
        <div className="h-[14px] w-px bg-black" />
        <input id="command" className="min-w-0 flex-1 outline-none" />
        <div className="flex w-[14px] flex-col gap-px">
          <button aria-label="Předchozí příkaz" className="flex h-[7px] items-center justify-center border border-[#aaa] bg-[#f0f0f0]">
            <svg width="6" height="3"><path d="M0 3l3-3 3 3z" /></svg>
          </button>
          <button aria-label="Další příkaz" className="flex h-[7px] items-center justify-center border border-[#aaa] bg-[#f0f0f0]">
            <svg width="6" height="3"><path d="M0 0h6L3 3z" /></svg>
          </button>
        </div>
        <div className="flex h-full w-[54px] items-center justify-between bg-[#f0f0f0] pl-[5px] pr-[15px]">
          <button aria-label="Vlevo"><Chevron /></button>
          <button aria-label="Vpravo"><Chevron right /></button>
        </div>
      </div>
    </div>
  </section>
);

const Snap = ({ label, state }: { label: string; state: 'on' | 'off' | 'mixed' }) => {
  const look = {
    on: 'border-[#333] bg-white h-[17px] w-[17px]',
    off: 'border-[#c4c4c4] bg-[#e1e1e1] h-[15px] w-[15px]',
    mixed: 'border-[#3c7fb1] bg-[#8c8c8c] h-[15px] w-[15px] ring-1 ring-inset ring-[#b9d3e6]',
  }[state];

  return (
    <label className="relative flex items-center whitespace-nowrap">
      <input type="checkbox" defaultChecked={state === 'on'} className={`peer shrink-0 appearance-none border ${look}`} />
      <svg width="17" height="17" fill="none" stroke="#555" strokeWidth="1.600" className="pointer-events-none absolute left-0 hidden peer-checked:block">
        <path d="M3.500 8.500l3.500 3.500 6.500-7" />
      </svg>
      <span className="pl-0.5">{label}</span>
    </label>
  );
};

const StatusBar = () => (
  <footer className="border-t border-[#a0a0a0] bg-[#f0f0f0] text-black">
    <div className="flex h-[21px] border-b border-[#a0a0a0]">
      <Grip />
      <div className="grid w-[912px] grid-cols-13 border-r border-[#a0a0a0] pl-px pr-1 font-['Liberation_Sans'] text-[11px]">
        {OSNAPS.map((label) => (
          <Snap key={label} label={label} state="on" />
        ))}
        <Snap label="Promítnout" state="off" />
        <Snap label="STrack" state="mixed" />
        <Snap label="Zakázat" state="off" />
      </div>
    </div>
    <div className="flex h-[19px] border-b border-dotted border-[#777] pl-[456px] text-[12px]">
      {['Krok', 'Orto', 'Rovinný', 'Uchop'].map((label) => (
        <button
          key={label}
          className={`w-[55px] border-r border-[#d9d9d9] pt-px ${label === 'Uchop' ? 'bg-[#f8f8f8] font-bold' : ''}`}
        >
          {label}
        </button>
      ))}
      <button className="w-[147px] border-r border-[#d9d9d9] pt-px">Zaznamenávat historii</button>
    </div>
  </footer>
);

export default function App() {
  return (
    <div className="relative h-screen overflow-hidden bg-white pl-1.5 font-['Roboto',sans-serif]">
      <div className="flex h-full flex-col border-l border-dotted border-[#777]">
        <TitleBar />
        <nav className="flex h-5 items-center pl-[5px] pt-0.5 text-[12px] text-[#1a1a1a]">
          {MENU.map(([before, key, after, width]) => (
            <button key={before + key + after} className={`whitespace-nowrap text-left ${width}`}>
              {before}
              <u className="underline-offset-2">{key}</u>
              {after}
            </button>
          ))}
        </nav>
        <CommandLine />

        <div className="flex h-[23px] shrink-0 bg-[#f0f0f0]">
          <div className="flex border-r border-[#c8c8c8] bg-[#e1e1e1]">
            <Grip />
            <div className="flex w-[708px] items-end justify-between">
              {MAIN_TOOLS.map((tool) => (
                <ToolButton key={tool.label} {...tool} />
              ))}
            </div>
          </div>
        </div>

        <div className="flex min-h-0 flex-1">
          <div className="w-[46px] shrink-0 bg-[#f0f0f0]">
            <div className="border-b border-[#a0a0a0] bg-[#e1e1e1]">
              <div className="mx-0.5 h-[7px] bg-[radial-gradient(#bbb_1px,transparent_1px)] bg-[size:3px_3px] bg-clip-content py-0.5" />
              <div className="grid h-[332px] grid-cols-2 content-between justify-items-center bg-[linear-gradient(#aaa,#aaa)] bg-[size:1px_100%] bg-center bg-no-repeat">
                {SIDE_TOOLS.map((tool) => (
                  <ToolButton key={tool.label} {...tool} />
                ))}
              </div>
            </div>
          </div>
          <Viewport />
          <LayersPanel />
        </div>

        <StatusBar />
      </div>

      {/* browser link preview covering the corner */}
      <div className="absolute bottom-0 left-0 h-[23px] w-[453px] rounded-tr border-r border-t border-[#ccc] bg-white font-['Open_Sans'] text-[14px] leading-[26px] text-[#777]">
        11/23/enHe.png
      </div>
    </div>
  );
}
